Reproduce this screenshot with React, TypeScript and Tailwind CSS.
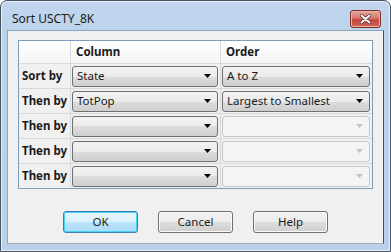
type Row = { label: string; column: string; order: string };

const rows: Row[] = [
  { label: "Sort by", column: "State", order: "A to Z" },
  { label: "Then by", column: "TotPop", order: "Largest to Smallest" },
  { label: "Then by", column: "", order: "" },
  { label: "Then by", column: "", order: "" },
  { label: "Then by", column: "", order: "" },
];

const font = { fontFamily: '"Noto Sans", "Open Sans", Arial, sans-serif' };

function Arrow({ disabled }: { disabled?: boolean }) {
  return (
    <svg width="7" height="4" viewBox="0 0 7 4" className="shrink-0">
      <path d="M0 0h7L3.5 4z" fill={disabled ? "#c2c2c2" : "#000"} />
    </svg>
  );
}

function Combo({ value, disabled }: { value: string; disabled?: boolean }) {
  return (
    <div
      className={
        disabled
          ? "flex h-[21px] w-full items-center justify-between rounded-[3px] border border-[#c5c9cc] bg-[#f4f4f4] pl-[4px] pr-[6px]"
          : "flex h-[21px] w-full items-center justify-between rounded-[3px] border border-[#707070] bg-[linear-gradient(#f2f2f2_0%,#ebebeb_50%,#dddddd_50%,#cfcfcf_100%)] pl-[4px] pr-[6px]"
      }
    >
      <span className="text-[11.5px] leading-none text-[#1a1a1a]">{value}</span>
      <Arrow disabled={disabled} />
    </div>
  );
}

function Button({ label, focused }: { label: string; focused?: boolean }) {
  return (
    <div
      className={
        focused
          ? "flex h-[22px] w-[75px] items-center justify-center rounded-[3px] border border-[#3c7fb1] bg-[linear-gradient(#eaf6fd_0%,#d9f0fc_50%,#bee6fd_50%,#a7d9f5_100%)] shadow-[inset_0_0_0_1px_#48d4f7] text-[11.5px] text-[#1a1a1a]"
          : "flex h-[22px] w-[75px] items-center justify-center rounded-[3px] border border-[#707070] bg-[linear-gradient(#f2f2f2_0%,#ebebeb_50%,#dddddd_50%,#cfcfcf_100%)] shadow-[inset_0_0_0_1px_#fbfbfb] text-[11.5px] text-[#1a1a1a]"
      }
    >
      {label}
    </div>
  );
}

export default function App() {
  return (
    <div style={font} className="h-[252px] w-[391px] bg-white">
      <div className="flex h-full w-full flex-col rounded-t-[7px] border border-[#4a5461] bg-[linear-gradient(#c2d6ee,#bcd3ec_30px,#b9d1eb)] shadow-[inset_0_0_0_1px_#e6eef8]">
        {/* title bar */}
        <div className="flex h-[29px] shrink-0 items-center justify-between pl-[11px] pr-[9px] pt-[7px]">
          <span className="text-[12px] text-[#1c1c1c]">Sort USCTY_8K</span>
          <div className="flex h-[18px] w-[31px] items-center justify-center rounded-[3px] border border-[#7b2c25] bg-[linear-gradient(#e5a79c_0%,#d6776b_45%,#c4453a_55%,#d2655a_100%)] shadow-[inset_0_0_0_1px_#eab4aa]">
            <svg width="11" height="10" viewBox="0 0 11 10">
              <path d="M1.5 1.5l8 7M9.5 1.5l-8 7" stroke="#4a2a2a" strokeWidth="3.4" strokeLinecap="round" />
              <path d="M1.5 1.5l8 7M9.5 1.5l-8 7" stroke="#ffffff" strokeWidth="2" strokeLinecap="round" />
            </svg>
          </div>
        </div>

        {/* client area */}
        <div className="mx-[6px] mb-[7px] flex flex-1 flex-col border border-[#8ea5bf] border-r-[#4b4f55] border-b-[#a7adb4] bg-[#f0f0f0] px-[10px] pt-[9px]">
          <div className="border border-[#7f9db9] bg-[#f0f0f0]">
            <div className="grid grid-cols-[52px_150px_1fr]">
              <div className="h-[23px] border-b border-r border-[#d5dadf] bg-[linear-gradient(#ffffff,#f4f4f4)]" />
              <div className="flex h-[23px] items-center border-b border-r border-[#d5dadf] bg-[linear-gradient(#ffffff,#f4f4f4)] pl-[5px] text-[11.5px] font-bold text-[#1a1a1a]">
                Column
              </div>
              <div className="flex h-[23px] items-center border-b border-[#d5dadf] bg-[linear-gradient(#ffffff,#f4f4f4)] pl-[5px] text-[11.5px] font-bold text-[#1a1a1a]">
                Order
              </div>
              {rows.map((row, i) => (
                <div key={i} className="contents">
                  <div
                    className={
                      i < rows.length - 1
                        ? "flex h-[25px] items-center border-b border-r border-[#d5dadf] pl-[3px] text-[11.5px] font-bold text-[#1a1a1a]"
                        : "flex h-[24px] items-center border-r border-[#d5dadf] pl-[3px] text-[11.5px] font-bold text-[#1a1a1a]"
                    }
                  >
                    {row.label}
                  </div>
                  <div
                    className={
                      i < rows.length - 1
                        ? "flex h-[25px] items-center border-b border-r border-[#d5dadf] pl-[1px] pr-[2px]"
                        : "flex h-[24px] items-center border-r border-[#d5dadf] pl-[1px] pr-[2px]"
                    }
                  >
                    <Combo value={row.column} />
                  </div>
                  <div
                    className={
                      i < rows.length - 1
                        ? "flex h-[25px] items-center border-b border-[#d5dadf] pl-[1px] pr-[2px]"
                        : "flex h-[24px] items-center pl-[1px] pr-[2px]"
                    }
                  >
                    <Combo value={row.order} disabled={i > 1} />
                  </div>
                </div>
              ))}
            </div>
          </div>

          <div className="mt-[22px] flex justify-center gap-[20px]">
            <Button label="OK" focused />
            <Button label="Cancel" />
            <Button label="Help" />
          </div>
        </div>
      </div>
    </div>
  );
}
